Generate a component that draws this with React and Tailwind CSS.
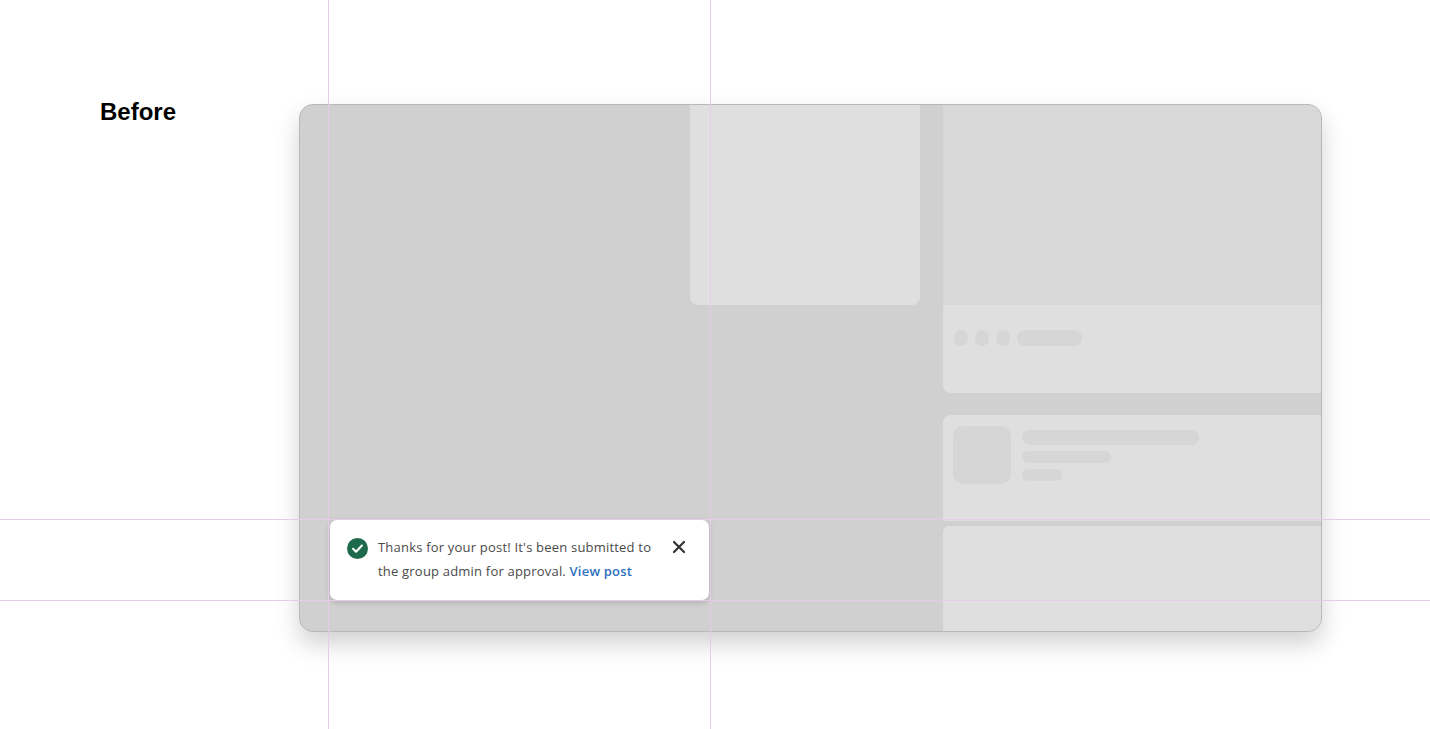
import React from 'react';

const Check = () => (
  <svg width="21" height="21" viewBox="0 0 20 20">
    <circle cx="10" cy="10" r="10" fill="#1d6a4c" />
    <path d="M5.8 10.3l2.8 2.7 5.6-5.8" fill="none" stroke="#fff" strokeWidth="2" strokeLinecap="round" strokeLinejoin="round" />
  </svg>
);

const Toast = () => (
  <div className="absolute left-[30px] top-[415px] w-[379px] h-[80px] bg-white rounded-[7px] shadow-[0_2px_6px_rgba(0,0,0,0.18)] flex items-start px-[17px] pt-[17px]">
    <div className="mt-[1px]"><Check /></div>
    <p className="ml-[10px] w-[290px] text-[13px] tracking-[0.2px] leading-[24px] text-[#4a4a4a] -mt-[2px]">
      Thanks for your post! It's been submitted to the group admin for approval.{' '}
      <span className="text-[#2d6fc0] font-semibold">View post</span>
    </p>
    <svg className="ml-[4px] mt-[3px]" width="14" height="14" viewBox="0 0 14 14">
      <path d="M2 2l10 10M12 2L2 12" stroke="#333" strokeWidth="2.2" strokeLinecap="round" />
    </svg>
  </div>
);

export default function App() {
  return (
    <div className="relative h-[729px] w-[1430px] bg-white overflow-hidden" style={{ fontFamily: '"Open Sans", Arial, sans-serif' }}>
      <div className="flex pt-[104px]">
        <div className="w-[299px] pl-[100px] -mt-[10px] text-[24px] font-bold text-black" style={{ fontFamily: '"Liberation Sans", Arial, sans-serif' }}>Before</div>
        <div className="relative w-[1023px] h-[528px] rounded-[14px] bg-[#d0d0d0] border border-[#b9b9b9] shadow-[0_12px_24px_rgba(0,0,0,0.18)] overflow-hidden flex">
          <div className="w-[390px]" />
          <div className="w-[230px] h-[200px] bg-[#dfdfdf] rounded-b-[8px]" />
          <div className="w-[23px]" />
          <div className="flex-1 flex flex-col">
            <div className="h-[200px] bg-[#d8d8d8]" />
            <div className="h-[88px] bg-[#dfdfdf] rounded-bl-[8px] flex items-start gap-[7px] pl-[11px] pt-[25px]">
              <div className="w-[14px] h-[16px] rounded-full bg-[#d6d6d6]" />
              <div className="w-[14px] h-[16px] rounded-full bg-[#d6d6d6]" />
              <div className="w-[14px] h-[16px] rounded-full bg-[#d6d6d6]" />
              <div className="w-[65px] h-[16px] rounded-full bg-[#d6d6d6]" />
            </div>
            <div className="h-[22px]" />
            <div className="h-[106px] bg-[#dfdfdf] rounded-tl-[8px] flex gap-[11px] pl-[10px] pt-[11px]">
              <div className="w-[58px] h-[58px] rounded-[10px] bg-[#d6d6d6]" />
              <div className="flex flex-col gap-[6px] pt-[4px]">
                <div className="w-[177px] h-[15px] rounded-full bg-[#d6d6d6]" />
                <div className="w-[89px] h-[12px] rounded-full bg-[#d6d6d6]" />
                <div className="w-[40px] h-[12px] rounded-full bg-[#d6d6d6]" />
              </div>
            </div>
            <div className="h-[5px]" />
            <div className="flex-1 bg-[#dfdfdf] rounded-tl-[6px]" />
          </div>
          <Toast />
        </div>
      </div>
      <div className="absolute left-[328px] top-0 w-px h-full bg-[#e9c9e6]" />
      <div className="absolute left-[710px] top-0 w-px h-full bg-[#e9c9e6]" />
      <div className="absolute top-[519px] left-0 h-px w-full bg-[#e9c9e6]" />
      <div className="absolute top-[600px] left-0 h-px w-full bg-[#e9c9e6]" />
    </div>
  );
}
